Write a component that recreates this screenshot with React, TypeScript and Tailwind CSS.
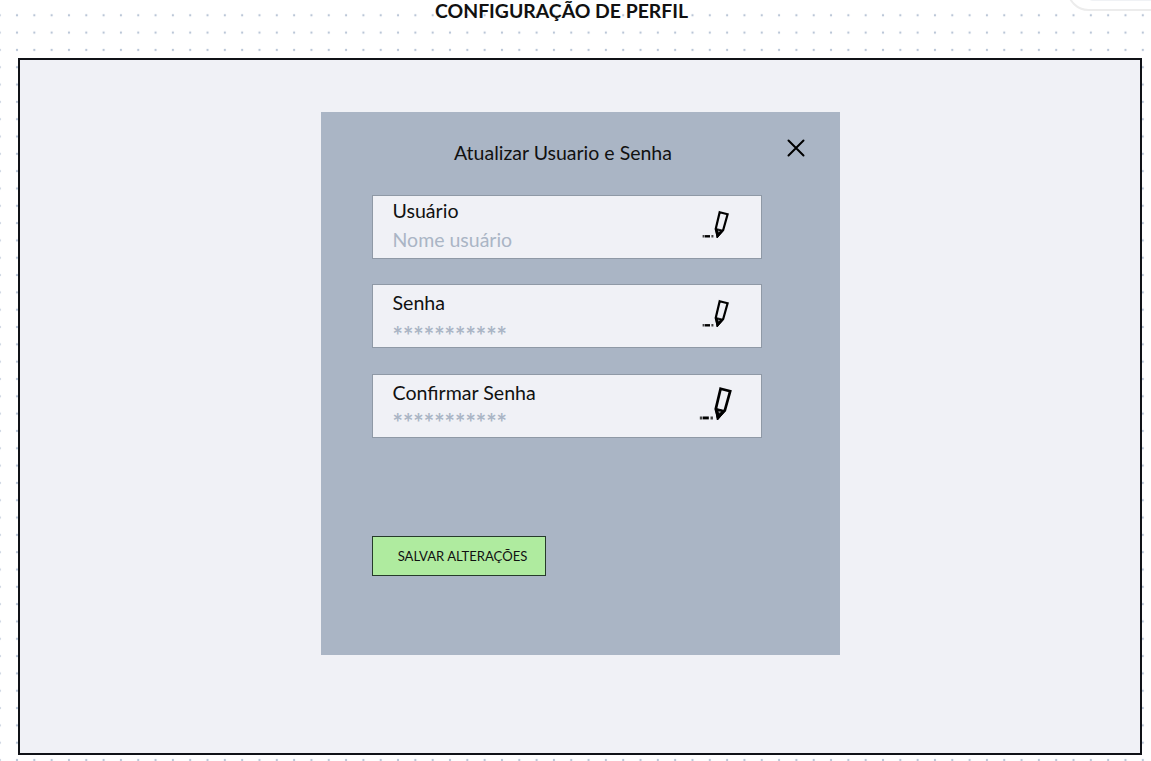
import type { ReactNode } from "react";

function Pencil({ className }: { className: string }) {
  return (
    <svg viewBox="0 0 27 28" className={className} fill="none" stroke="#000" aria-hidden="true">
      <path d="M17.7 2.2 25.6 4.2 21.2 20 15.6 26 13.7 19Z" strokeWidth="2.2" />
      <path d="M13.6 18.4 21.6 20.4 15 28.2Z" fill="#000" strokeWidth="0.8" />
      <path d="M15.9 20.6 18.3 21.2 16.4 22.6Z" fill="#8b8c90" stroke="none" />
      <path d="M0.6 26.3H2.6M9.4 26.3H11.4" stroke="#444" strokeWidth="2.4" />
      <path d="M3 26.3H8" strokeWidth="2.4" />
    </svg>
  );
}

type FieldProps = {
  label: string;
  hint: string;
  labelClass: string;
  hintClass: string;
  icon: ReactNode;
};

function Field({ label, hint, labelClass, hintClass, icon }: FieldProps) {
  return (
    <div className="flex h-16 w-[390px] items-start justify-between border border-[#8f99a6] bg-[#f0f1f6] pl-[19.5px]">
      <div className="flex flex-col text-[19.6px] leading-6">
        <span className={labelClass}>{label}</span>
        <span className={hintClass}>{hint}</span>
      </div>
      {icon}
    </div>
  );
}

export default function App() {
  return (
    <div className="relative flex h-[761px] w-[1151px] flex-col overflow-hidden bg-white font-['Lato',sans-serif] text-[#111]">
      <svg className="absolute inset-0 h-full w-full" aria-hidden="true">
        <defs>
          <pattern id="dots" x="8.34" y="6.6" width="17.32" height="17.32" patternUnits="userSpaceOnUse">
            <circle cx="8.66" cy="8.66" r="1.15" fill="#b9c5d6" />
          </pattern>
        </defs>
        <rect width="100%" height="100%" fill="url(#dots)" />
      </svg>
      <div className="absolute -top-8 left-[1067px] h-[43px] w-40 rounded-[22px] border-2 border-[#ececec] bg-white">
        <div className="ml-[18px] h-[31px] rounded-b-md bg-[#f0f2f5]" />
      </div>
      <h1 className="relative ml-[435px] h-[57.5px] whitespace-nowrap text-[19.4px] font-bold leading-[21px]">
        CONFIGURAÇÃO DE PERFIL
      </h1>
      <main className="relative ml-[18px] flex h-[697px] w-[1124px] shrink-0 flex-col border-2 border-[#101217] bg-[#f0f1f6] pl-[301px] pt-[52px]">
        <section className="flex h-[543px] w-[519px] flex-col bg-[#aab5c5] pl-[51px]">
          <header className="flex h-[83px] items-start justify-between pl-[82px] pr-[35px]">
            <h2 className="pt-[29px] text-[19.5px] leading-6">Atualizar Usuario e Senha</h2>
            <button type="button" aria-label="Fechar" className="mt-[27px]">
              <svg viewBox="0 0 18 18" className="h-[18px] w-[18px]" stroke="#000" strokeWidth="2" strokeLinecap="round" aria-hidden="true">
                <path d="M1.5 1.5 16.5 16.5M16.5 1.5 1.5 16.5" />
              </svg>
            </button>
          </header>
          <div className="flex flex-col gap-[25.5px]">
            <Field
              label="Usuário"
              hint="Nome usuário"
              labelClass="mt-[3px]"
              hintClass="mt-[5px] text-[19.5px] text-[#aab5c5]"
              icon={<Pencil className="mr-[32px] mt-[14px] h-7 w-[27px]" />}
            />
            <Field
              label="Senha"
              hint="***********"
              labelClass="mt-[6px]"
              hintClass="mt-[9px] text-[24.5px] font-bold text-[#aab5c5]"
              icon={<Pencil className="mr-[32px] mt-[14px] h-7 w-[27px]" />}
            />
            <Field
              label="Confirmar Senha"
              hint="***********"
              labelClass="mt-[6px]"
              hintClass="mt-[6px] text-[24.5px] font-bold text-[#aab5c5]"
              icon={<Pencil className="mr-[29px] mt-[11px] h-[34px] w-[33px]" />}
            />
          </div>
          <button
            type="button"
            className="mt-[98px] flex h-10 w-[174px] items-center justify-center border border-[#263a2b] bg-[#afeb9f] pl-[7px] pt-[2px] text-[13.1px]"
          >
            SALVAR ALTERAÇÕES
          </button>
        </section>
      </main>
    </div>
  );
}
